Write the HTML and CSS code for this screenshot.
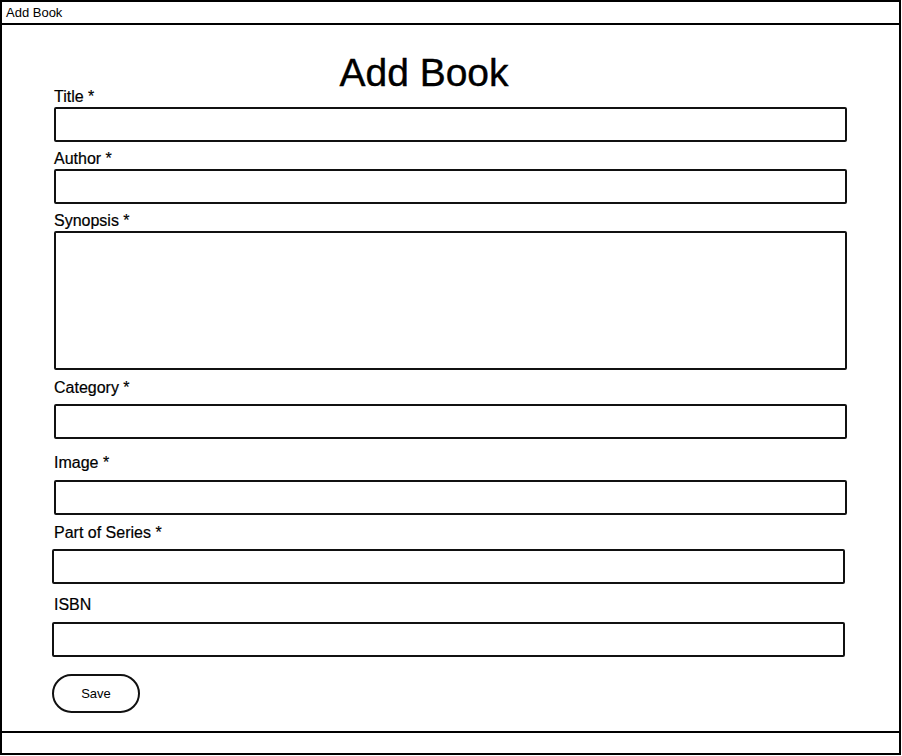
FILE: index.html
```html
<!DOCTYPE html>
<html lang="en">

<head>
     <meta charset="UTF-8">
     <meta name="viewport" content="width=device-width, initial-scale=1.0">
     <title>Add Book</title>
     <link rel="stylesheet" href="styles.css">
</head>

<body>
     <div class="window">
          <div class="titlebar">Add Book</div>

          <div class="content">
               <h1>Add Book</h1>

               <form class="book-form">
                    <div class="field">
                         <label for="title">Title *</label>
                         <input type="text" id="title">
                    </div>
                    <div class="field gap-8">
                         <label for="author">Author *</label>
                         <input type="text" id="author">
                    </div>
                    <div class="field gap-8">
                         <label for="synopsis">Synopsis *</label>
                         <textarea id="synopsis"></textarea>
                    </div>
                    <div class="field loose gap-9">
                         <label for="category">Category *</label>
                         <input type="text" id="category">
                    </div>
                    <div class="field looser gap-15">
                         <label for="image">Image *</label>
                         <input type="text" id="image">
                    </div>
                    <div class="field loose gap-9 shift">
                         <label for="series">Part of Series *</label>
                         <input type="text" id="series">
                    </div>
                    <div class="field looser gap-12 shift">
                         <label for="isbn">ISBN</label>
                         <input type="text" id="isbn">
                    </div>

                    <button type="button" class="save-btn">Save</button>
               </form>
          </div>

          <div class="statusbar"></div>
     </div>
</body>

</html>
```

FILE: styles.css
```css
body {
     margin: 0;
     font-family: "Liberation Sans", Arial, sans-serif;
     color: #000;
     background-color: #fff;
}

.window {
     box-sizing: border-box;
     width: 901px;
     height: 755px;
     border: 2px solid #000;
     display: flex;
     flex-direction: column;
}

.titlebar {
     height: 21px;
     line-height: 21px;
     padding-left: 4px;
     font-size: 13px;
     border-bottom: 2px solid #000;
}

.content {
     flex: 1;
     padding: 33px 0 0 52px;
}

.content h1 {
     width: 740px;
     margin: 0;
     font-size: 39px;
     font-weight: normal;
     line-height: 30px;
     text-align: center;
     -webkit-text-stroke: 0.4px #000;
}

.book-form {
     display: flex;
     flex-direction: column;
     align-items: flex-start;
}

.field label {
     display: block;
     font-size: 16px;
     line-height: 18px;
     margin-bottom: 1px;
     -webkit-text-stroke: 0.2px #000;
}

.field input,
.field textarea {
     display: block;
     box-sizing: border-box;
     width: 793px;
     height: 35px;
     margin: 0;
     border: 2px solid #111;
     border-radius: 2px;
     background-color: #fff;
     font: inherit;
     resize: none;
}

.field textarea {
     height: 139px;
}

/* spacing between rows, taken from the mockup */
.gap-8 {
     margin-top: 8px;
}

.gap-9 {
     margin-top: 9px;
}

.gap-12 {
     margin-top: 12px;
}

.gap-15 {
     margin-top: 15px;
}

.field.loose label {
     margin-bottom: 7px;
}

.field.looser label {
     margin-bottom: 8px;
}

.field.shift {
     margin-left: -2px;
}

.field.shift label {
     padding-left: 2px;
}

.save-btn {
     box-sizing: border-box;
     width: 88px;
     height: 39px;
     margin: 17px 0 0 -2px;
     border: 2px solid #111;
     border-radius: 20px;
     background-color: #fff;
     font-family: inherit;
     font-size: 13px;
     color: #000;
     cursor: pointer;
}

.statusbar {
     height: 20px;
     border-top: 2px solid #000;
}
```
